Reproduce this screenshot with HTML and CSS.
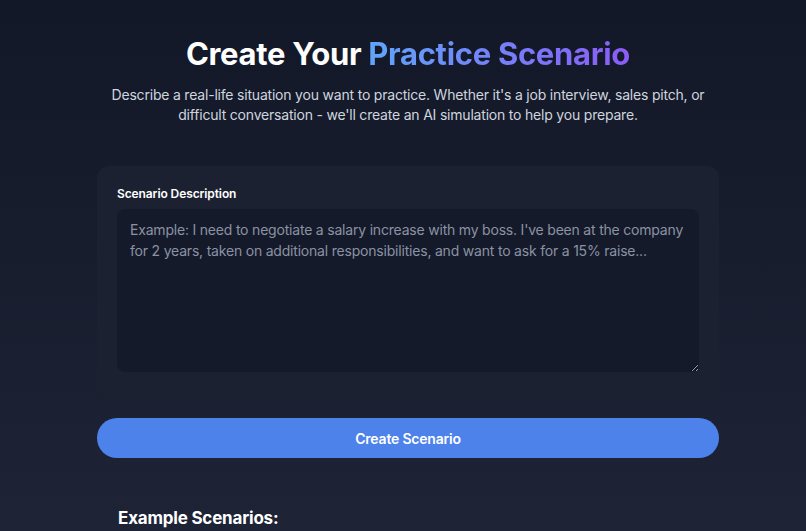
FILE: index.html
```html
<!DOCTYPE html>
<html lang="en">
<head>
<meta charset="utf-8">
<title>Create Your Practice Scenario</title>
<link rel="stylesheet" href="styles.css">
</head>
<body>
<main class="page">
  <header class="hero">
    <h1 class="title">Create Your <span class="accent">Practice Scenario</span></h1>
    <p class="subtitle">Describe a real-life situation you want to practice. Whether it's a job interview, sales pitch, or difficult conversation - we'll create an AI simulation to help you prepare.</p>
  </header>
  <section class="card">
    <label class="label" for="desc">Scenario Description</label>
    <textarea id="desc" class="input" placeholder="Example: I need to negotiate a salary increase with my boss. I've been at the company for 2 years, taken on additional responsibilities, and want to ask for a 15% raise..."></textarea>
  </section>
  <button class="btn" type="button">Create Scenario</button>
  <section class="examples">
    <h2 class="examples-title">Example Scenarios:</h2>
  </section>
</main>
</body>
</html>
```

FILE: styles.css
```css
* { box-sizing: border-box; }
html, body { margin: 0; height: 100%; }
body {
  font-family: Inter, "Noto Sans", sans-serif;
  background: linear-gradient(180deg, #121828 0%, #1e2335 100%);
  color: #fff;
  overflow: hidden;
  padding-left: 10px;
}
.page {
  width: 622px;
  margin: 0 auto;
  padding-top: 34px;
}
.hero { text-align: center; }
.title {
  margin: 0;
  font-size: 31px;
  font-weight: 700;
  line-height: 40px;
  letter-spacing: -0.3px;
}
.accent {
  background: linear-gradient(90deg, #60a5fa 0%, #8b5cf6 100%);
  -webkit-background-clip: text;
  background-clip: text;
  color: transparent;
}
.subtitle {
  margin: 11px auto 0;
  max-width: 600px;
  font-size: 14px;
  line-height: 20px;
  letter-spacing: -0.2px;
  color: #cfd5df;
}
.card {
  margin-top: 41px;
  background: #1c2132;
  border-radius: 12px;
  padding: 20px 20px 24px;
  display: flex;
  flex-direction: column;
}
.label {
  font-size: 12px;
  font-weight: 600;
  line-height: 16px;
  letter-spacing: -0.1px;
  margin-bottom: 7px;
}
.input {
  height: 163px;
  resize: vertical;
  background: #151a2a;
  border: none;
  border-radius: 8px;
  padding: 11px 13px;
  font-family: inherit;
  font-size: 14px;
  line-height: 20.5px;
  letter-spacing: -0.2px;
  color: #fff;
  outline: none;
}
.input::placeholder { color: #8a92a3; }
.btn {
  display: block;
  width: 100%;
  margin-top: 22px;
  height: 40px;
  border: none;
  border-radius: 20px;
  background: #4d82ea;
  color: #fff;
  font-family: inherit;
  font-size: 14px;
  font-weight: 600;
  letter-spacing: -0.2px;
}
.examples { padding: 0 21px; margin-top: 49px; }
.examples-title {
  margin: 0;
  font-size: 17px;
  font-weight: 700;
  line-height: 22px;
  letter-spacing: -0.2px;
}
```
